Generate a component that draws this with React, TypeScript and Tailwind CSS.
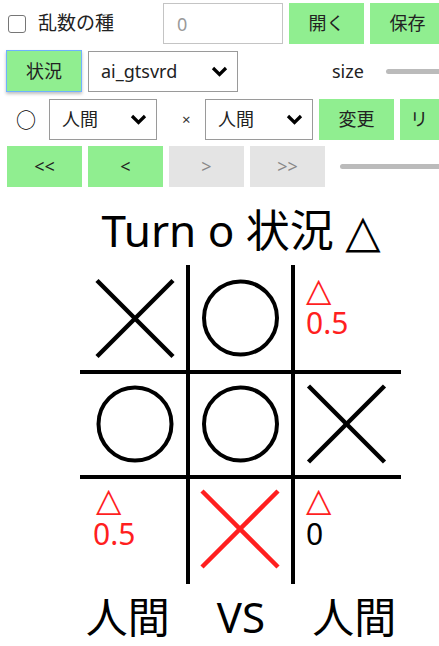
import React from 'react';

const FONT = { fontFamily: '"Noto Sans", "Noto Sans CJK JP", sans-serif' };
const TRI = { fontFamily: '"DejaVu Sans", sans-serif' };

function Chevron() {
  return (
    <svg width="17" height="11" viewBox="0 0 17 11" className="shrink-0">
      <polyline points="2,2 8.5,8.5 15,2" fill="none" stroke="#000" strokeWidth="3.2" />
    </svg>
  );
}

function FakeSelect({ value, width }: { value: string; width: string }) {
  return (
    <div
      className={`flex items-center justify-between h-[41px] border border-[#9a9a9a] bg-white pl-[12px] pr-[9px] text-[18px] text-[#222] ${width}`}
    >
      <span>{value}</span>
      <Chevron />
    </div>
  );
}

function Btn({ children, gray }: { children: React.ReactNode; gray?: boolean }) {
  return (
    <div
      className={`flex items-center justify-center shrink-0 w-[75px] h-[41px] text-[18px] ${
        gray ? 'bg-[#e4e4e4] text-[#888]' : 'bg-[#90ee90] text-[#222]'
      }`}
    >
      {children}
    </div>
  );
}

function Cross({ x, y, color }: { x: number; y: number; color: string }) {
  return (
    <g stroke={color} strokeWidth="4.5">
      <line x1={x - 38} y1={y - 38} x2={x + 38} y2={y + 38} />
      <line x1={x + 38} y1={y - 38} x2={x - 38} y2={y + 38} />
    </g>
  );
}

export default function App() {
  const red = '#ff1f1f';
  return (
    <div className="w-[439px] h-[646px] overflow-hidden bg-white text-black" style={FONT}>
      {/* row 1 */}
      <div className="flex items-center mt-[3px] w-[600px]">
        <span className="ml-[8px] w-[18px] h-[18px] border-[1.5px] border-[#767676] rounded-[3px] bg-white shrink-0" />
        <span className="ml-[12px] w-[125px] text-[19px] text-[#222]">乱数の種</span>
        <input
          className="w-[120px] h-[41px] border border-[#c4c4c4] pl-[13px] text-[18px] placeholder:text-[#9a9a9a] outline-none"
          placeholder="0"
        />
        <div className="ml-[6px] flex gap-[6px]">
          <Btn>開く</Btn>
          <Btn>保存</Btn>
        </div>
      </div>

      {/* row 2 */}
      <div className="flex items-center mt-[6px] w-[600px]">
        <div className="ml-[6px] flex items-center justify-center w-[76px] h-[42px] bg-[#90ee90] border border-[#6fb2ff] shadow-[0_2px_3px_rgba(0,0,0,0.25)] text-[18px] text-[#222]">
          状況
        </div>
        <div className="ml-[6px]">
          <FakeSelect value="ai_gtsvrd" width="w-[150px]" />
        </div>
        <span className="ml-[94px] text-[18px] text-[#222]">size</span>
        <div className="ml-[22px] w-[80px] h-[5px] rounded-full bg-[#bbbbbb]" />
      </div>

      {/* row 3 */}
      <div className="flex items-center mt-[7px] w-[600px]">
        <span className="ml-[16px] w-[21px] text-[20px] leading-none" style={{ fontFamily: '"Noto Sans CJK JP", sans-serif' }}>
          ○
        </span>
        <div className="ml-[12px]">
          <FakeSelect value="人間" width="w-[108px]" />
        </div>
        <span className="ml-[25px] w-[23px] text-[15px] text-[#333]">×</span>
        <FakeSelect value="人間" width="w-[108px]" />
        <div className="ml-[6px] flex gap-[6px]">
          <Btn>変更</Btn>
          <div className="flex items-center h-[41px] pl-[10px] pr-[10px] bg-[#90ee90] text-[18px] text-[#222] tracking-[14px]">リセット</div>
        </div>
      </div>

      {/* row 4 */}
      <div className="flex items-center mt-[6px] w-[600px]">
        <div className="ml-[7px] flex gap-[6px]">
          <Btn>&lt;&lt;</Btn>
          <Btn>&lt;</Btn>
          <Btn gray>&gt;</Btn>
          <Btn gray>&gt;&gt;</Btn>
        </div>
        <div className="ml-[15px] w-[120px] h-[5px] rounded-full bg-[#bbbbbb]" />
      </div>

      {/* title */}
      <div className="ml-[80px] w-[322px] mt-[15px] text-center text-[44px] leading-[57px] whitespace-nowrap">
        Turn o 状況 <span className="text-[46px]" style={TRI}>△</span>
      </div>

      {/* board */}
      <svg className="ml-[80px] mt-[5px] block" width="322" height="320" viewBox="0 0 322 320">
        <g stroke="#000" strokeWidth="4">
          <line x1="108" y1="0" x2="108" y2="319" />
          <line x1="213" y1="0" x2="213" y2="319" />
          <line x1="0" y1="107" x2="321" y2="107" />
          <line x1="0" y1="212" x2="321" y2="212" />
        </g>
        <Cross x={55} y={53.5} color="#000" />
        <circle cx="160.5" cy="53" r="36.5" fill="none" stroke="#000" strokeWidth="4" />
        <circle cx="55" cy="159" r="36.5" fill="none" stroke="#000" strokeWidth="4" />
        <circle cx="160.5" cy="159" r="36.5" fill="none" stroke="#000" strokeWidth="4" />
        <Cross x={266.5} y={159} color="#000" />
        <Cross x={160} y={264} color={red} />
        <g fontSize="30" style={FONT}>
          <text x="226" y="36" fill={red} fontSize="33" style={TRI}>△</text>
          <text x="226" y="69" fill={red}>0.5</text>
          <text x="16" y="246" fill={red} fontSize="33" style={TRI}>△</text>
          <text x="13" y="280" fill={red}>0.5</text>
          <text x="226" y="246" fill={red} fontSize="33" style={TRI}>△</text>
          <text x="226" y="280" fill="#000">0</text>
        </g>
      </svg>

      {/* bottom */}
      <div className="ml-[80px] w-[322px] mt-[4px] flex justify-center gap-[47px] text-[42px] leading-[56px]">
        <span>人間</span>
        <span>VS</span>
        <span>人間</span>
      </div>
    </div>
  );
}
